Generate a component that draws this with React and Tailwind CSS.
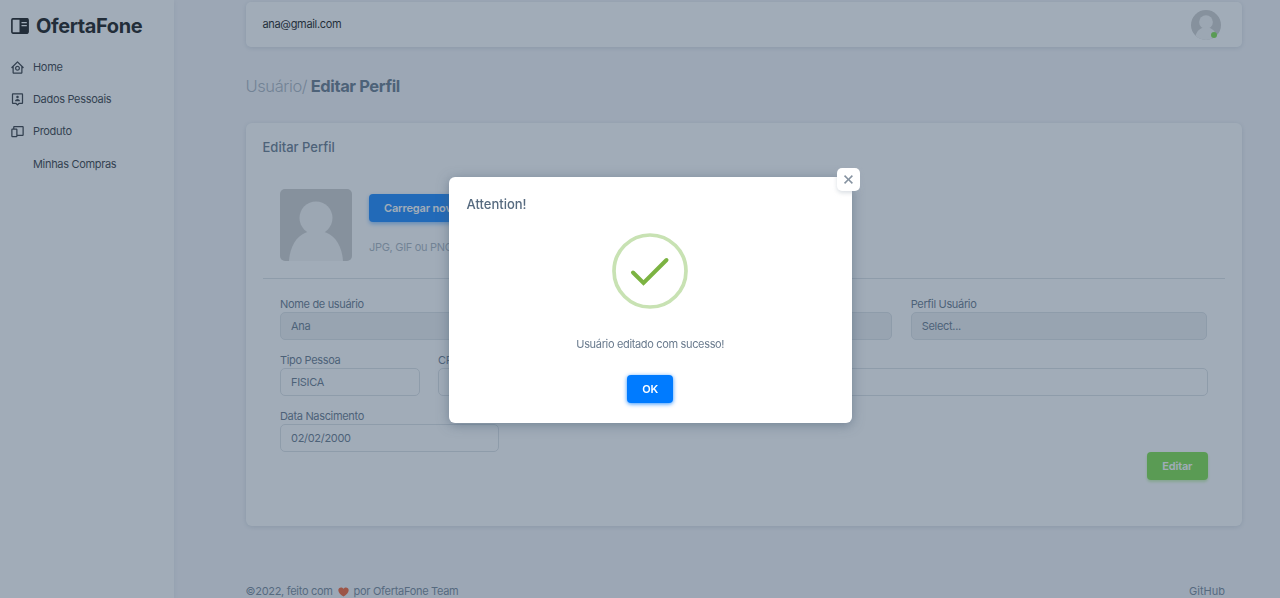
import React from "react";
import { BiHomeCircle, BiUserPin, BiDevices, BiX } from "react-icons/bi";

function Logo() {
  return (
    <svg viewBox="0 0 18 16" className="h-4 w-[18px] shrink-0">
      <rect x="0.9" y="0.9" width="16.2" height="14.2" rx="1" fill="none" stroke="#000" strokeWidth="1.6" />
      <path d="M8.5 0.5H17V15.5H8.5Z" fill="#000" />
      <path d="M10.5 4.6H15.8M10.5 7.6H15.8" stroke="#fff" strokeWidth="1.3" />
    </svg>
  );
}

function Person({ className }) {
  return (
    <svg viewBox="0 0 72 72" className={className}>
      <rect width="72" height="72" fill="#c8c8c8" />
      <circle cx="36" cy="29" r="16.5" fill="#f4f4f4" />
      <path d="M9 72C10 56 18 45 29 42.500H43C54 45 62 56 63 72Z" fill="#f4f4f4" />
    </svg>
  );
}

function NavItem({ icon, children }) {
  return (
    <li className="flex h-[32.300px] items-center text-[11px] tracking-[-0.32px] text-[#22272e]">
      <span className="w-[23px] shrink-0">{icon}</span>
      <span>{children}</span>
    </li>
  );
}

function Field({ label, value, disabled, className }) {
  return (
    <div className={className}>
      <div className="h-4 pt-px text-[11px] leading-[15px] tracking-[-0.33px] whitespace-nowrap text-[#566a7f]">{label}</div>
      <div
        className={
          "flex h-7 items-center rounded-[5px] border border-[#d9dee3] px-[10px] text-[11px] tracking-[-0.3px] text-[#566a7f] " +
          (disabled ? "bg-[#eceef1]" : "bg-white")
        }
      >
        {value}
      </div>
    </div>
  );
}

export default function App() {
  return (
    <div className="flex h-[598px] overflow-hidden bg-[#f5f5f9] font-['Inter',sans-serif] text-[#697a8d]">
      <aside className="w-[174px] shrink-0 bg-white pl-[10px] shadow-[0_1px_5px_rgba(67,89,113,0.12)]">
        <div className="flex h-[51px] items-center gap-[7px] pl-px text-[20px] font-bold tracking-[-0.4px] text-black">
          <Logo />
          <span>OfertaFone</span>
        </div>
        <ul>
          <NavItem icon={<BiHomeCircle size={15} />}>Home</NavItem>
          <NavItem icon={<BiUserPin size={15} />}>Dados Pessoais</NavItem>
          <NavItem icon={<BiDevices size={15} />}>Produto</NavItem>
          <NavItem>Minhas Compras</NavItem>
        </ul>
      </aside>

      <div className="flex grow flex-col pr-[38px] pl-[71.500px]">
        <header className="mt-[2px] flex h-[45px] shrink-0 items-center justify-between rounded-[5px] bg-white pr-[21px] pl-[17px] text-[11px] tracking-[-0.33px] text-black shadow-[0_1px_5px_rgba(67,89,113,0.2)]">
          <span>ana@gmail.com</span>
          <div className="relative">
            <Person className="size-[30px] rounded-full" />
            <span className="absolute right-[4px] bottom-[2px] size-[6px] rounded-full bg-[#71dd37]" />
          </div>
        </header>

        <h4 className="mt-[27px] h-[25px] text-[16.500px] leading-[25px] font-bold tracking-[-0.4px] text-[#566a7f]">
          <span className="font-light text-[#a1acb8]">Usuário/</span> Editar Perfil
        </h4>

        <section className="mt-6 h-[403px] shrink-0 rounded-[6px] bg-white shadow-[0_1px_5px_rgba(67,89,113,0.2)]">
          <h5 className="px-[17px] pt-[15px] text-[13px] leading-[18px] font-medium text-[#566a7f]">Editar Perfil</h5>
          <div className="mt-[33px] flex gap-[17px] pl-[34.500px]">
            <Person className="size-[72px] rounded-[5px]" />
            <div className="pt-[5px]">
              <button className="h-[28px] rounded-[4px] bg-[#007bff] px-[15px] text-[11px] font-semibold tracking-[-0.15px] text-white shadow-[0_2px_4px_rgba(0,123,255,0.5)]">
                Carregar nova foto
              </button>
              <p className="mt-[17px] text-[11px] leading-[17px] tracking-[-0.3px] text-[#a1acb8]">
                JPG, GIF ou PNG. Tamanho máximo 800K
              </p>
            </div>
          </div>
          <hr className="mx-[17px] mt-[17px] border-[#d9dee3]" />
          <div className="px-[34.500px] pt-[17px]">
            <div className="flex gap-[18.500px]">
              <Field className="flex-1" label="Nome de usuário" value="Ana" disabled />
              <Field className="flex-1" label="E-mail" value="ana@gmail.com" disabled />
              <Field className="flex-1" label="Perfil Usuário" value="Select..." disabled />
            </div>
            <div className="mt-3 flex gap-[18.500px]">
              <Field className="w-[139.500px]" label="Tipo Pessoa" value="FISICA" />
              <Field className="w-[139.500px]" label="CPF" value="" />
              <Field className="flex-1" label="" value="" />
            </div>
            <Field className="mt-3 w-[219px]" label="Data Nascimento" value="02/02/2000" />
            <div className="flex justify-end">
              <button className="h-[28px] w-[60.500px] rounded-[4px] bg-[#71dd37] text-[11px] font-semibold tracking-[-0.15px] text-white shadow-[0_2px_3px_rgba(113,221,55,0.4)]">
                Editar
              </button>
            </div>
          </div>
        </section>

        <footer className="mt-[57px] flex h-[17px] shrink-0 items-center justify-between pr-[17px] text-[11px]">
          <span className="flex items-center tracking-[-0.3px]">
            ©2022, feito com
            <svg viewBox="0 0 12 11" className="mx-[5px] h-[10px] w-[11px]">
              <path d="M6 10.500C3 8.500 0.300 6.200 0.300 3.500C0.300 0.300 4.300-0.600 6 2C7.700-0.600 11.700 0.300 11.700 3.500C11.700 6.200 9 8.500 6 10.500Z" fill="#f4511e" />
            </svg>
            por OfertaFone Team
          </span>
          <span>GitHub</span>
        </footer>
      </div>

      <div className="fixed inset-0 bg-[#435971]/50">
        <div role="dialog" className="relative mt-[177px] ml-[449px] flex h-[246px] w-[402.500px] flex-col items-center rounded-[6px] bg-white shadow-[0_2px_12px_rgba(67,89,113,0.5)]">
          <button className="absolute -top-[9px] -right-[8px] flex size-[23px] items-center justify-center rounded-[5px] bg-white text-[#8592a0] shadow-[0_2px_4px_rgba(161,172,184,0.4)]">
            <BiX size={19} />
          </button>
          <h5 className="mt-[18px] self-start pl-[17.500px] text-[13px] leading-[18px] font-medium text-[#566a7f]">Attention!</h5>
          <svg viewBox="0 0 76 76" className="mt-[19.500px] size-[76px]" fill="none">
            <circle cx="38" cy="38" r="36" stroke="#c8e2b3" strokeWidth="3.700" />
            <path d="M21 39.500L31.500 50L54.500 27" stroke="#7cb342" strokeWidth="4" strokeLinecap="round" />
          </svg>
          <p className="mt-[27.500px] text-[11px] leading-[17px] tracking-[-0.34px]">Usuário editado com sucesso!</p>
          <button className="mt-[22px] h-[28px] w-[46px] rounded-[4px] bg-[#007bff] text-[11px] font-semibold text-white shadow-[0_1px_4px_rgba(0,123,255,0.8)]">
            OK
          </button>
        </div>
      </div>
    </div>
  );
}
